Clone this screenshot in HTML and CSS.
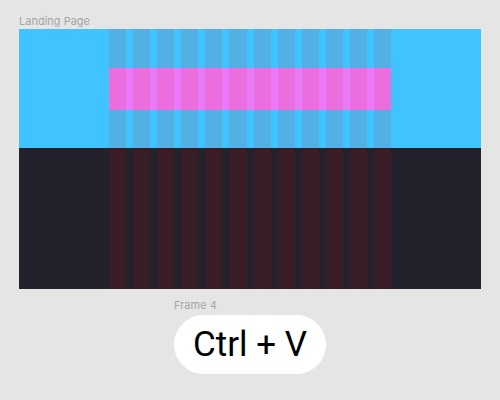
FILE: index.html
```html
<!DOCTYPE html>
<html>
<head>
<meta charset="utf-8">
<link rel="stylesheet" href="styles.css">
</head>
<body>
<div class="canvas">
  <div class="frame-label">Landing Page</div>
  <div class="frame">
    <div class="hero">
      <div class="hero-bar"></div>
    </div>
    <div class="dark"></div>
    <div class="grid">
      <div class="col"></div><div class="col"></div><div class="col"></div><div class="col"></div>
      <div class="col"></div><div class="col"></div><div class="col"></div><div class="col"></div>
      <div class="col"></div><div class="col"></div><div class="col"></div><div class="col"></div>
    </div>
  </div>
  <div class="small">
    <div class="frame-label small-label">Frame 4</div>
    <div class="pill">Ctrl + V</div>
  </div>
</div>
</body>
</html>
```

FILE: styles.css
```css
html, body {
  margin: 0;
  padding: 0;
  background: #e5e5e5;
  width: 500px;
  height: 400px;
  overflow: hidden;
}
.canvas {
  padding: 15px 19px 0 19px;
  font-family: Inter, "Noto Sans", sans-serif;
}
.frame-label {
  font-size: 11px;
  line-height: 13px;
  height: 13px;
  color: #a6a6a6;
  white-space: nowrap;
}
.frame {
  position: relative;
  margin-top: 1px;
  width: 462px;
  height: 260px;
  display: flex;
  flex-direction: column;
}
.hero {
  height: 119px;
  background: #40c4ff;
  padding: 39px 90px 0 90px;
  box-sizing: border-box;
}
.hero-bar {
  height: 42px;
  background: #e97bf8;
}
.dark {
  flex: 1;
  background: #22212c;
}
.grid {
  position: absolute;
  top: 0;
  bottom: 0;
  left: 90px;
  right: 90px;
  display: grid;
  grid-template-columns: repeat(12, 1fr);
  column-gap: 7px;
  pointer-events: none;
}
.col {
  background: rgba(255, 0, 0, 0.1);
}
.small {
  margin-left: 155px;
  padding-top: 10px;
}
.small-label {
  margin-bottom: 3px;
}
.pill {
  display: flex;
  align-items: center;
  justify-content: center;
  width: 152px;
  height: 59px;
  box-sizing: border-box;
  border-radius: 30px;
  background: #ffffff;
  font-family: Roboto, "Liberation Sans", sans-serif;
  font-size: 35px;
  color: #000;
  white-space: nowrap;
}
```
